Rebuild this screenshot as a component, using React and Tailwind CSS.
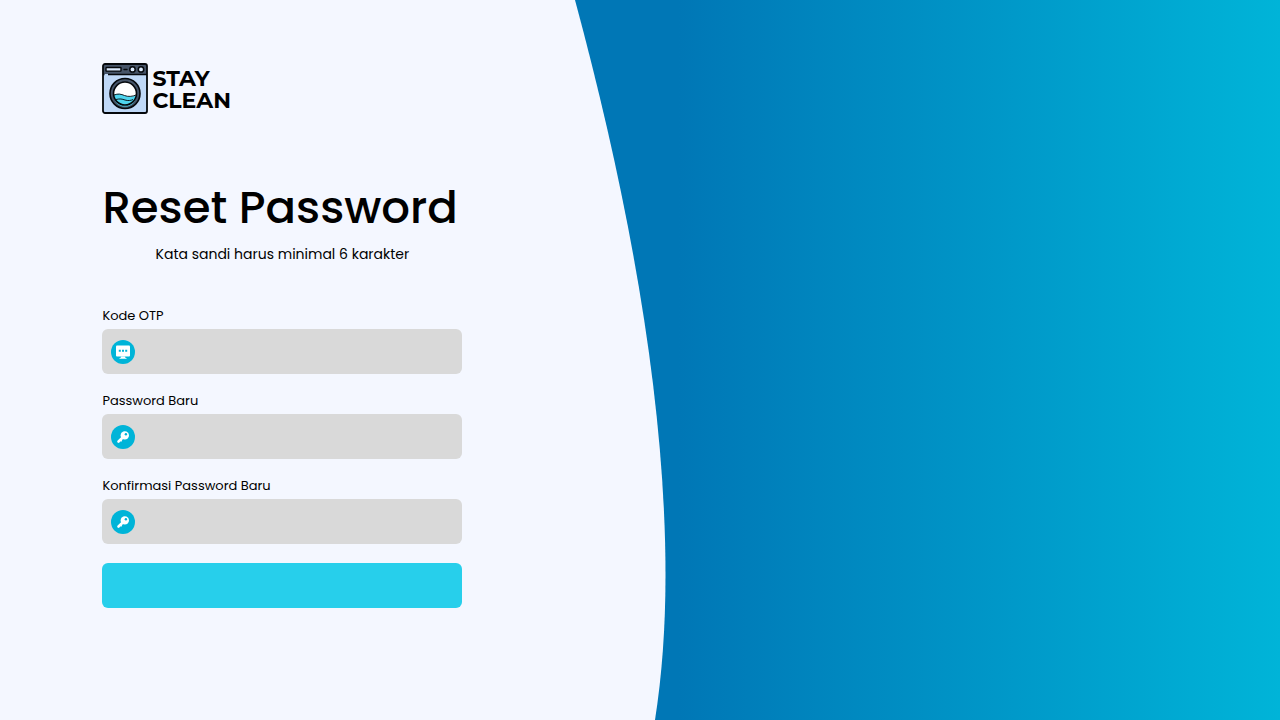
import React from "react";

function WashingMachine() {
  return (
    <svg viewBox="0 0 46 51" className="h-[51px] w-[46px] shrink-0" aria-hidden="true">
      <rect x="1" y="1" width="44" height="49" rx="2" fill="#bfd8f7" />
      <path d="M1 11V3a2 2 0 0 1 2-2h40a2 2 0 0 1 2 2v8z" fill="#475569" />
      <path d="M1 11.500H2.500M6 11.500H45" stroke="#05080c" strokeWidth="1.600" />
      <rect x="1" y="1" width="44" height="49" rx="2" fill="none" stroke="#05080c" strokeWidth="1.800" />
      <rect x="4" y="4.500" width="15" height="3.600" rx="0.600" fill="#dbeafe" stroke="#05080c" strokeWidth="1.400" />
      <path d="M22 6.500h3" stroke="#05080c" strokeWidth="1.400" strokeLinecap="round" />
      <circle cx="30.500" cy="6.400" r="2.700" fill="#dbeafe" stroke="#05080c" strokeWidth="1.500" />
      <circle cx="39" cy="6.400" r="2.700" fill="#dbeafe" stroke="#05080c" strokeWidth="1.500" />
      <circle cx="23" cy="30.500" r="15" fill="#475569" stroke="#05080c" strokeWidth="1.600" />
      <circle cx="23" cy="30.500" r="11.500" fill="#fff" />
      <path d="M11.500 32c4-2 7-1.500 11 .5s8 1 12-.5a11.500 11.500 0 0 1-23 0z" fill="#4fd5ee" />
      <path d="M12 32c4-1.500 7-1 10.500.5s8 1 11.500-.5M14 36.500c4-1 6-.5 9 .5s6 .5 8-.5" fill="none" stroke="#05080c" strokeWidth="0.900" />
      <circle cx="23" cy="30.500" r="11.500" fill="none" stroke="#05080c" strokeWidth="1.600" />
    </svg>
  );
}

function MonitorIcon() {
  return (
    <svg viewBox="0 0 24 24" className="size-6" aria-hidden="true">
      <circle cx="12" cy="12" r="12" fill="#00b4d8" />
      <rect x="5" y="5.500" width="14" height="11" rx="1" fill="#fff" />
      <path d="M10 16.500h4l.5 1.500H15.500v.8h-7V18h1z" fill="#fff" />
      <path d="M7.800 9.800h2v2h-2zM11 9.800h2v2h-2zM14.200 9.800h2v2h-2z" fill="#00b4d8" />
    </svg>
  );
}

function KeyIcon() {
  return (
    <svg viewBox="0 0 24 24" className="size-6" aria-hidden="true">
      <circle cx="12" cy="12" r="12" fill="#00b4d8" />
      <path d="M12 12.200l-4.500 4.300" stroke="#fff" strokeWidth="2.600" strokeLinecap="round" />
      <path d="M9.500 15l1.200 1.200" stroke="#fff" strokeWidth="1.500" />
      <circle cx="13.800" cy="10.400" r="4.200" fill="#fff" />
      <circle cx="14.900" cy="9.300" r="1.200" fill="#00b4d8" />
    </svg>
  );
}

function Field({ id, label, type, icon }) {
  return (
    <div className="flex flex-col gap-0.5">
      <label htmlFor={id} className="text-[13px]/[22px]">{label}</label>
      <div className="flex h-[45px] items-center gap-3 rounded-md bg-[#d9d9d9] px-[9px]">
        {icon}
        <input id={id} type={type} className="h-full min-w-0 flex-1 bg-transparent text-sm outline-none" />
      </div>
    </div>
  );
}

export default function App() {
  return (
    <main className="relative isolate min-h-screen overflow-hidden bg-linear-[90deg,#0077b6_53%,#00b4d8_100%] font-['Poppins','Inter',sans-serif] text-black">
      <svg viewBox="0 0 1280 720" preserveAspectRatio="none" className="absolute inset-0 -z-10 size-full" aria-hidden="true">
        <path d="M0 0H575C629 200 665.500 400 665.500 575C665.500 627 662 675 655 720H0Z" fill="#f4f7ff" />
      </svg>
      <div className="ml-[8%] w-[360px] max-w-[84%] pt-[63px] pb-12">
        <div className="flex items-center gap-1">
          <WashingMachine />
          <p className="pt-0.5 font-['Montserrat','Inter',sans-serif] text-[22px]/[22px] font-bold">STAY<br />CLEAN</p>
        </div>
        <h1 className="mt-16 text-[45px]/[60px] font-medium whitespace-nowrap">Reset Password</h1>
        <p className="mt-1 text-center text-sm/6">Kata sandi harus minimal 6 karakter</p>
        <form className="mt-[39px] flex flex-col gap-4" onSubmit={(event) => event.preventDefault()}>
          <Field id="otp" label="Kode OTP" type="text" icon={<MonitorIcon />} />
          <Field id="password" label="Password Baru" type="password" icon={<KeyIcon />} />
          <Field id="confirmation" label="Konfirmasi Password Baru" type="password" icon={<KeyIcon />} />
          <button type="submit" aria-label="Reset Password" className="mt-[3px] h-[45px] rounded-md bg-[#27cfeb]" />
        </form>
      </div>
    </main>
  );
}
